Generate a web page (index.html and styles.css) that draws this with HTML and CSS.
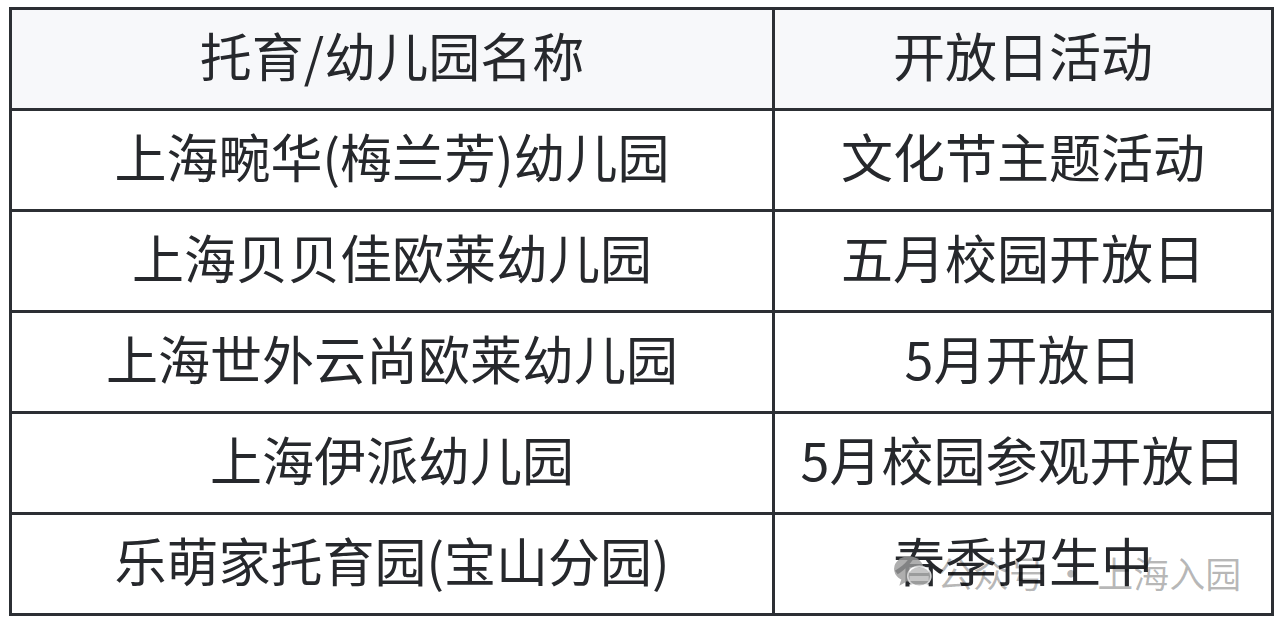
FILE: index.html
```html
<!DOCTYPE html>
<html lang="zh-CN">
<head>
<meta charset="utf-8">
<title>开放日活动</title>
<link rel="stylesheet" href="styles.css">
</head>
<body>
<div class="page">
  <table class="grid">
    <thead>
      <tr><th class="c1">托育/幼儿园名称</th><th class="c2">开放日活动</th></tr>
    </thead>
    <tbody>
      <tr><td>上海畹华(梅兰芳)幼儿园</td><td>文化节主题活动</td></tr>
      <tr><td>上海贝贝佳欧莱幼儿园</td><td>五月校园开放日</td></tr>
      <tr><td>上海世外云尚欧莱幼儿园</td><td>5月开放日</td></tr>
      <tr><td>上海伊派幼儿园</td><td>5月校园参观开放日</td></tr>
      <tr><td>乐萌家托育园(宝山分园)</td><td>春季招生中</td></tr>
    </tbody>
  </table>
  <div class="watermark">
    <svg class="wm-icon" width="40" height="38" viewBox="0 0 38 36">
      <ellipse cx="15" cy="15" rx="14" ry="12" fill="#9a9a9a"/>
      <ellipse cx="25" cy="22" rx="11" ry="9.5" fill="#b9b9b9" stroke="#fff" stroke-width="1.5"/>
      <path d="M8 25 L6 31 L13 27 Z" fill="#9a9a9a"/>
    </svg>
    <span>公众号 · 上海入园</span>
  </div>
</div>
</body>
</html>
```

FILE: styles.css
```css
html, body {
  margin: 0;
  padding: 0;
  background: #ffffff;
}
.page {
  position: relative;
  width: 1280px;
  height: 624px;
  padding: 7px 0 0 9px;
  box-sizing: border-box;
}
.grid {
  border-collapse: collapse;
  width: 1265px;
  table-layout: fixed;
  font-family: "Noto Sans CJK SC", "Noto Sans", sans-serif;
  font-size: 52px;
  color: #26282c;
}
.grid th, .grid td {
  border: 3px solid #2c2f34;
  height: 101px;
  padding: 0 0 8px 0;
  box-sizing: border-box;
  text-align: center;
  vertical-align: middle;
  font-weight: 400;
  line-height: 1.2;
  white-space: nowrap;
}
.grid th {
  background: #f7f8fa;
}
.grid .c1 { width: 763px; }
.watermark {
  position: absolute;
  left: 893px;
  top: 546px;
  display: flex;
  align-items: center;
  gap: 4px;
  font-family: "Noto Sans CJK SC", sans-serif;
  font-size: 36px;
  color: rgba(0, 0, 0, 0.28);
  white-space: nowrap;
}
.wm-icon { opacity: 0.8; }
```
